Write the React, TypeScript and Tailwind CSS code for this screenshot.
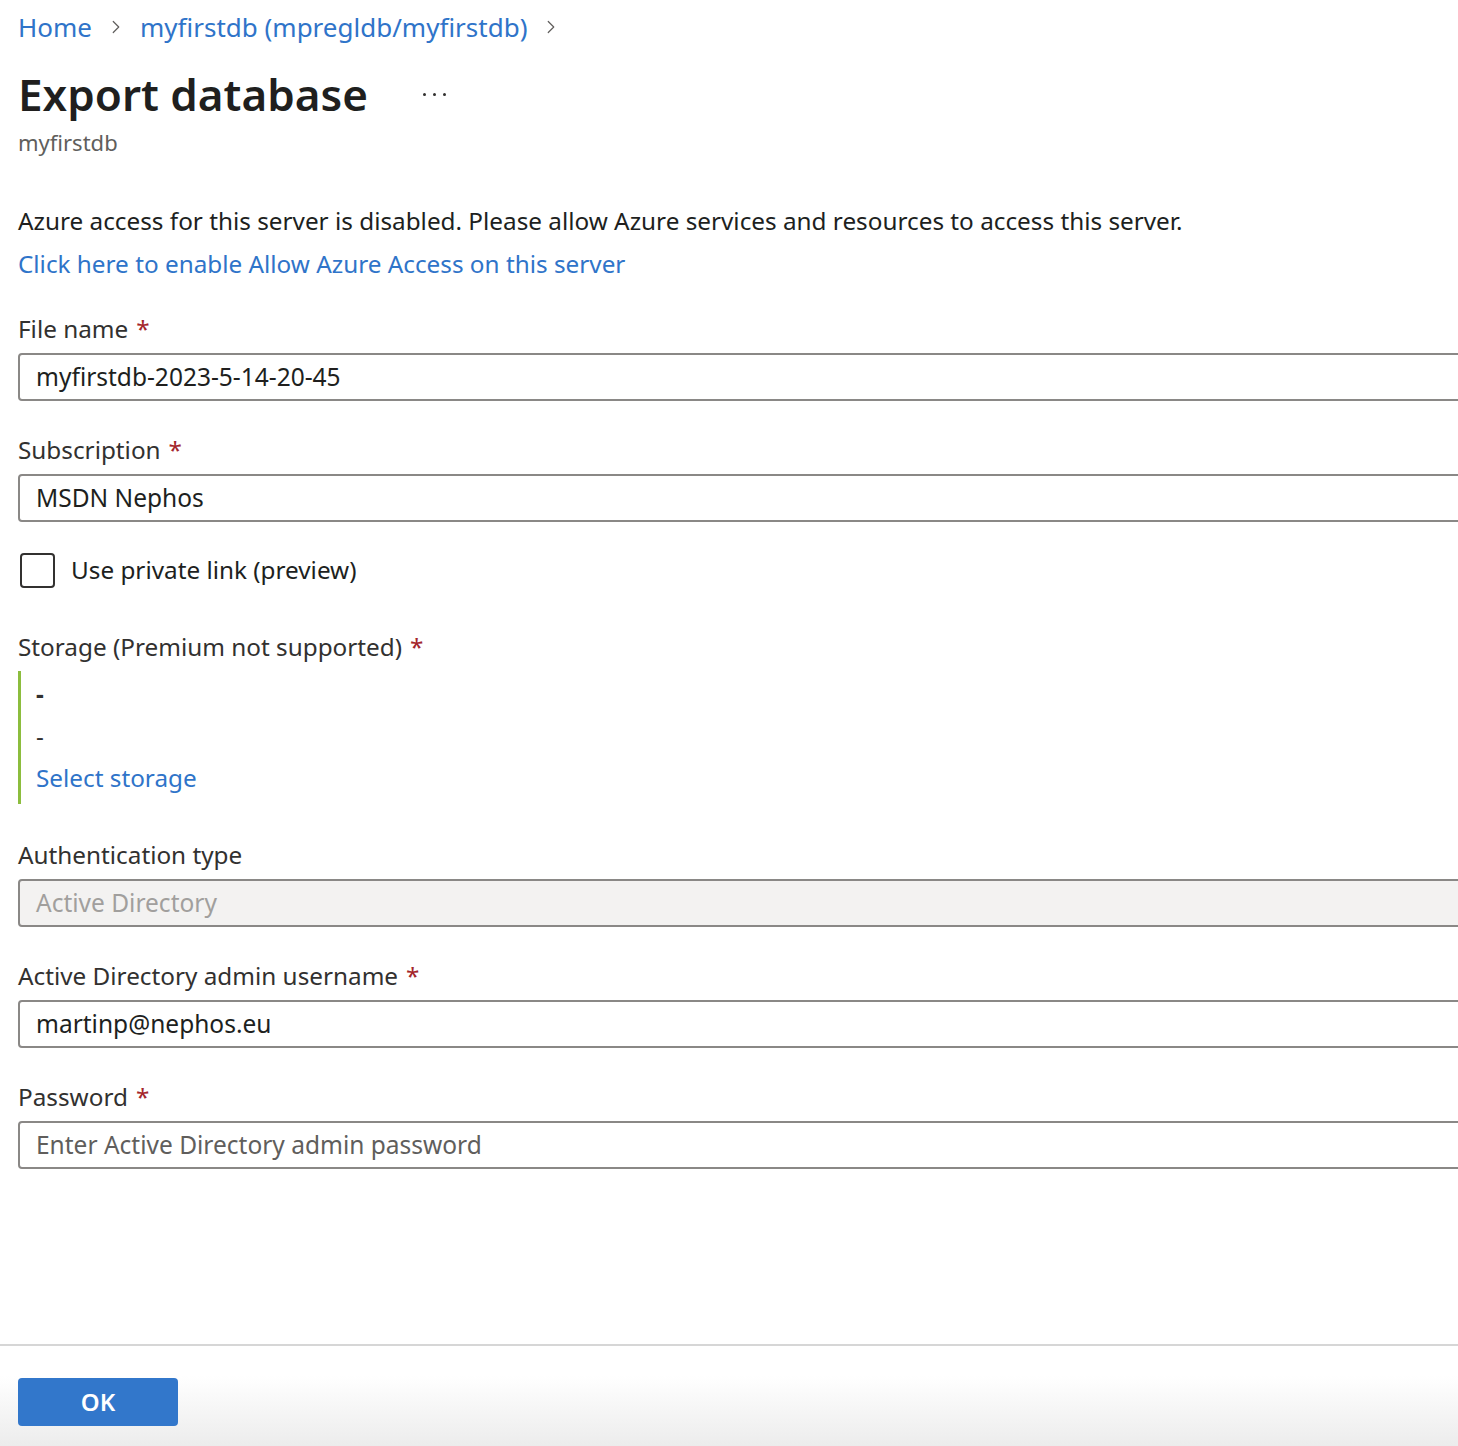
import { ChevronRight } from 'lucide-react';

const Required = () => <span className="ml-2 text-[#a4262c]">*</span>;

const Field = ({ label, required, children }: { label: string; required?: boolean; children: React.ReactNode }) => (
  <div className="flex flex-col">
    <label className="text-[24.3px] leading-[32px] text-[#323130]">
      {label}
      {required && <Required />}
    </label>
    <div className="mt-[8px]">{children}</div>
  </div>
);

const TextBox = ({ value, placeholder, disabled }: { value?: string; placeholder?: string; disabled?: boolean }) => (
  <div
    className={`flex h-[48px] w-[1480px] items-center rounded-[4px] border-2 border-[#8a8886] px-[16px] text-[24.5px] ${
      disabled ? 'bg-[#f3f2f1] text-[#a19f9d]' : 'bg-white'
    } ${value ? (disabled ? '' : 'text-[#201f1e]') : 'text-[#605e5c]'}`}
  >
    {value ?? placeholder}
  </div>
);

export default function App() {
  return (
    <div className="relative flex h-[1446px] w-full flex-col overflow-hidden bg-white font-['Noto_Sans',sans-serif] text-[#323130]">
      <div className="flex-1 px-[18px]">
        <nav className="flex h-[54px] items-center gap-[13px] text-[26px] text-[#2f74c9]">
          <span>Home</span>
          <ChevronRight className="h-[22px] w-[22px] text-[#605e5c]" strokeWidth={1.3} />
          <span>myfirstdb (mpregldb/myfirstdb)</span>
          <ChevronRight className="h-[22px] w-[22px] text-[#605e5c]" strokeWidth={1.3} />
        </nav>
        <div className="mt-[11px] flex items-center">
          <h1 className="text-[44px] font-semibold leading-[58px] text-[#201f1e]">Export database</h1>
          <span className="ml-[55px] flex gap-[7px]">
            <span className="h-[3px] w-[3px] rounded-full bg-[#323130]" />
            <span className="h-[3px] w-[3px] rounded-full bg-[#323130]" />
            <span className="h-[3px] w-[3px] rounded-full bg-[#323130]" />
          </span>
        </div>
        <div className="mt-[4px] text-[22px] leading-[30px] text-[#605e5c]">myfirstdb</div>

        <p className="mt-[42px] text-[24.3px] leading-[43px] text-[#201f1e]">
          Azure access for this server is disabled. Please allow Azure services and resources to access this server.
        </p>
        <a className="block text-[24.3px] leading-[43px] text-[#2f74c9]">Click here to enable Allow Azure Access on this server</a>

        <div className="mt-[28px] flex flex-col gap-[33px]">
          <Field label="File name" required>
            <TextBox value="myfirstdb-2023-5-14-20-45" />
          </Field>
          <Field label="Subscription" required>
            <TextBox value="MSDN Nephos" />
          </Field>
        </div>

        <label className="mt-[30px] flex items-center gap-[16px] text-[24.3px] text-[#201f1e]">
          <span className="ml-[2px] h-[35px] w-[35px] rounded-[4px] border-2 border-[#323130]" />
          Use private link (preview)
        </label>

        <div className="mt-[43px]">
          <div className="text-[24.3px] leading-[32px]">
            Storage (Premium not supported)
            <Required />
          </div>
          <div className="mt-[8px] flex flex-col border-l-[3px] border-[#8cbd3e] pt-[2px] pb-[5px] pl-[15px] text-[24.3px] leading-[42px]">
            <span className="font-bold">-</span>
            <span>-</span>
            <a className="text-[#2f74c9]">Select storage</a>
          </div>
        </div>

        <div className="mt-[35px] flex flex-col gap-[33px]">
          <Field label="Authentication type">
            <TextBox value="Active Directory" disabled />
          </Field>
          <Field label="Active Directory admin username" required>
            <TextBox value="martinp@nephos.eu" />
          </Field>
          <Field label="Password" required>
            <TextBox placeholder="Enter Active Directory admin password" />
          </Field>
        </div>
      </div>

      <footer className="h-[102px] border-t-2 border-[#d6d6d6] bg-gradient-to-b from-white from-30% to-[#ececec] px-[18px] pt-[32px]">
        <button className="h-[48px] w-[160px] rounded-[4px] bg-[#3277cb] text-[24px] font-semibold text-white">OK</button>
      </footer>
    </div>
  );
}
